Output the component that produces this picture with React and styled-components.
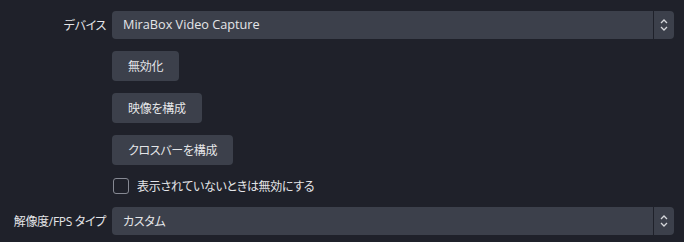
import React from "react";
import styled, { createGlobalStyle } from "styled-components";

const Global = createGlobalStyle`
  html, body { margin: 0; padding: 0; background: #1f212a; }
  body {
    font-family: "Open Sans", "Noto Sans CJK JP", sans-serif;
    font-feature-settings: "palt";
    color: #e4e5e8;
    font-size: 12px;
    letter-spacing: -0.3px;
    line-height: 1.25;
  }
`;

const Form = styled.div`
  display: grid;
  grid-template-columns: 106px 1fr;
  grid-template-rows: 28px 30px 30px 30px 18px 28px;
  column-gap: 6px;
  row-gap: 12px;
  padding: 11px 10px 0 0;
  width: 684px;
  height: 242px;
  box-sizing: border-box;
`;

const Label = styled.div`
  display: flex;
  align-items: center;
  justify-content: flex-end;
  white-space: nowrap;
  color: #e4e5e8;
`;

const Field = styled.div`
  display: flex;
  align-items: stretch;
`;

const Select = styled.div`
  display: flex;
  align-items: stretch;
  width: 100%;
  background: #3c404b;
  border-radius: 4px;
  overflow: hidden;
`;

const SelectText = styled.div`
  flex: 1;
  display: flex;
  align-items: center;
  padding-left: 11px;
  font-size: ${(p) => (p.$latin ? "12.7px" : "12px")};
  letter-spacing: ${(p) => (p.$latin ? "0" : "-0.3px")};
`;

const Spinner = styled.div`
  width: 20px;
  border-left: 1px solid #1f212a;
  display: flex;
  align-items: center;
  justify-content: center;
`;

const Button = styled.button`
  padding: 0 16px;
  border: none;
  border-radius: 4px;
  background: #3c404b;
  color: #e4e5e8;
  font: inherit;
  letter-spacing: inherit;
  font-feature-settings: "palt";
`;

const CheckRow = styled.label`
  display: flex;
  align-items: center;
  gap: 8px;
  padding-left: 1px;
`;

const Box = styled.span`
  width: 16px;
  height: 16px;
  box-sizing: border-box;
  border: 1.5px solid #868993;
  border-radius: 3px;
`;

const Arrows = () => (
  <svg width="10" height="16" viewBox="0 0 10 16" fill="none" stroke="#d6d7db" strokeWidth="1.3">
    <path d="M2 6 L5 3 L8 6" />
    <path d="M2 10 L5 13 L8 10" />
  </svg>
);

const Dropdown = ({ value, latin }) => (
  <Select>
    <SelectText $latin={latin}>{value}</SelectText>
    <Spinner>
      <Arrows />
    </Spinner>
  </Select>
);

export default function App() {
  return (
    <>
      <Global />
      <Form>
        <Label>デバイス</Label>
        <Field>
          <Dropdown value="MiraBox Video Capture" latin />
        </Field>
        <div />
        <Field>
          <Button>無効化</Button>
        </Field>
        <div />
        <Field>
          <Button>映像を構成</Button>
        </Field>
        <div />
        <Field>
          <Button>クロスバーを構成</Button>
        </Field>
        <div />
        <CheckRow>
          <Box />
          <span>表示されていないときは無効にする</span>
        </CheckRow>
        <Label>解像度/FPS タイプ</Label>
        <Field>
          <Dropdown value="カスタム" />
        </Field>
      </Form>
    </>
  );
}
